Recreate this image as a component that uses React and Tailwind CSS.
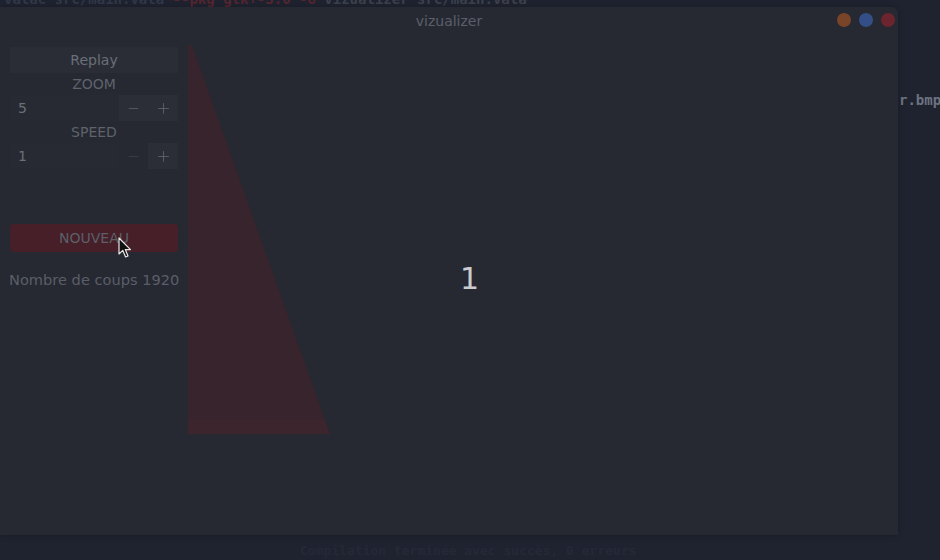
import { Minus, Plus } from 'lucide-react';

const font = { fontFamily: '"DejaVu Sans", "Liberation Sans", sans-serif' };

const Stepper = ({ value, minusDisabled }) => (
  <div className="flex h-[26px] items-stretch">
    <div className="flex flex-1 items-center bg-[#272a33] pl-[8px] text-[14px] text-[#6b6f79]">{value}</div>
    <button
      type="button"
      className={`flex w-[29px] items-center justify-center ${minusDisabled ? 'bg-[#262932] text-[#3f434c]' : 'bg-[#2b2e37] text-[#5f636d]'}`}
    >
      <Minus size={15} strokeWidth={1.2} />
    </button>
    <button type="button" className="flex w-[30px] items-center justify-center bg-[#2b2e37] text-[#5f636d]">
      <Plus size={17} strokeWidth={1.2} />
    </button>
  </div>
);

const Cursor = () => (
  <svg width="14" height="22" viewBox="0 0 14 22" className="absolute left-[118px] top-[237px]">
    <path d="M1 1 L1 17 L4.8 13.4 L7.6 20 L10 19 L7.3 12.6 L12.5 12.6 Z" fill="#111" stroke="#e8e8e8" strokeWidth="1.2" strokeLinejoin="round" />
  </svg>
);

export default function App() {
  return (
    <div className="relative h-[560px] w-[940px] overflow-hidden bg-[#1f2330]" style={font}>
      {/* terminal behind the window */}
      <div
        className="absolute left-[4px] top-[-11px] whitespace-nowrap text-[14px] font-bold text-[#313849]"
        style={{ fontFamily: '"DejaVu Sans Mono", monospace' }}
      >
        <span>valac src/main.vala </span>
        <span className="text-[#55262f]">--pkg gtk+-3.0 -o</span>
        <span className="text-[#3c414d]"> vizualizer src/main.vala</span>
      </div>
      <div
        className="absolute left-[899px] top-[90px] whitespace-nowrap text-[14px] font-bold text-[#6d7280]"
        style={{ fontFamily: '"DejaVu Sans Mono", monospace' }}
      >
        r.bmp
      </div>
      <div
        className="absolute left-[300px] top-[541px] whitespace-nowrap text-[13px] font-bold text-[#242937]"
        style={{ fontFamily: '"DejaVu Sans Mono", monospace' }}
      >
        Compilation terminée avec succès, 0 erreurs
      </div>

      {/* window */}
      <div className="absolute left-0 top-[7px] flex h-[528px] w-[898px] flex-col rounded-tr-[6px] bg-[#262932] shadow-[0_0_6px_rgba(0,0,0,0.25)]">
        <div className="relative flex h-[28px] items-center justify-center">
          <span className="text-[14px] text-[#5b5f6a]">vizualizer</span>
          <div className="absolute right-[3px] top-[6px] flex gap-[8px]">
            <span className="h-[14px] w-[14px] rounded-full bg-[#7a4428]" />
            <span className="h-[14px] w-[14px] rounded-full bg-[#344e88]" />
            <span className="h-[14px] w-[14px] rounded-full bg-[#6c242e]" />
          </div>
        </div>

        <div className="flex flex-1">
          <div className="ml-[10px] flex w-[168px] flex-col pt-[12px] text-[14px] text-[#6b6f79]">
            <button type="button" className="h-[26px] bg-[#2a2d36] pt-[1px] text-center">Replay</button>
            <div className="flex h-[22px] items-center justify-center text-[#5e626c]">ZOOM</div>
            <Stepper value="5" />
            <div className="flex h-[22px] items-center justify-center text-[#5e626c]">SPEED</div>
            <Stepper value="1" minusDisabled />
            <button type="button" className="mt-[55px] h-[28px] rounded-[4px] bg-[#461f28] text-center text-[#5c5f68]">
              NOUVEAU
            </button>
            <div className="ml-[-1px] mt-[17px] whitespace-nowrap text-[14.6px] text-[#5a5e68]">Nombre de coups 1920</div>
          </div>

          <div className="relative flex-1">
            <svg width="160" height="400" className="absolute left-[10px] top-[10px]">
              <polygon points="0,0 4,0 142,389 0,389" fill="#37242c" />
              <polygon points="0,375 137,375 142,389 0,389" fill="#3c252d" />
            </svg>
            <div className="absolute left-[282px] top-[221px] text-[30px] text-[#c9cbd1]">1</div>
          </div>
        </div>
      </div>

      <Cursor />
    </div>
  );
}
